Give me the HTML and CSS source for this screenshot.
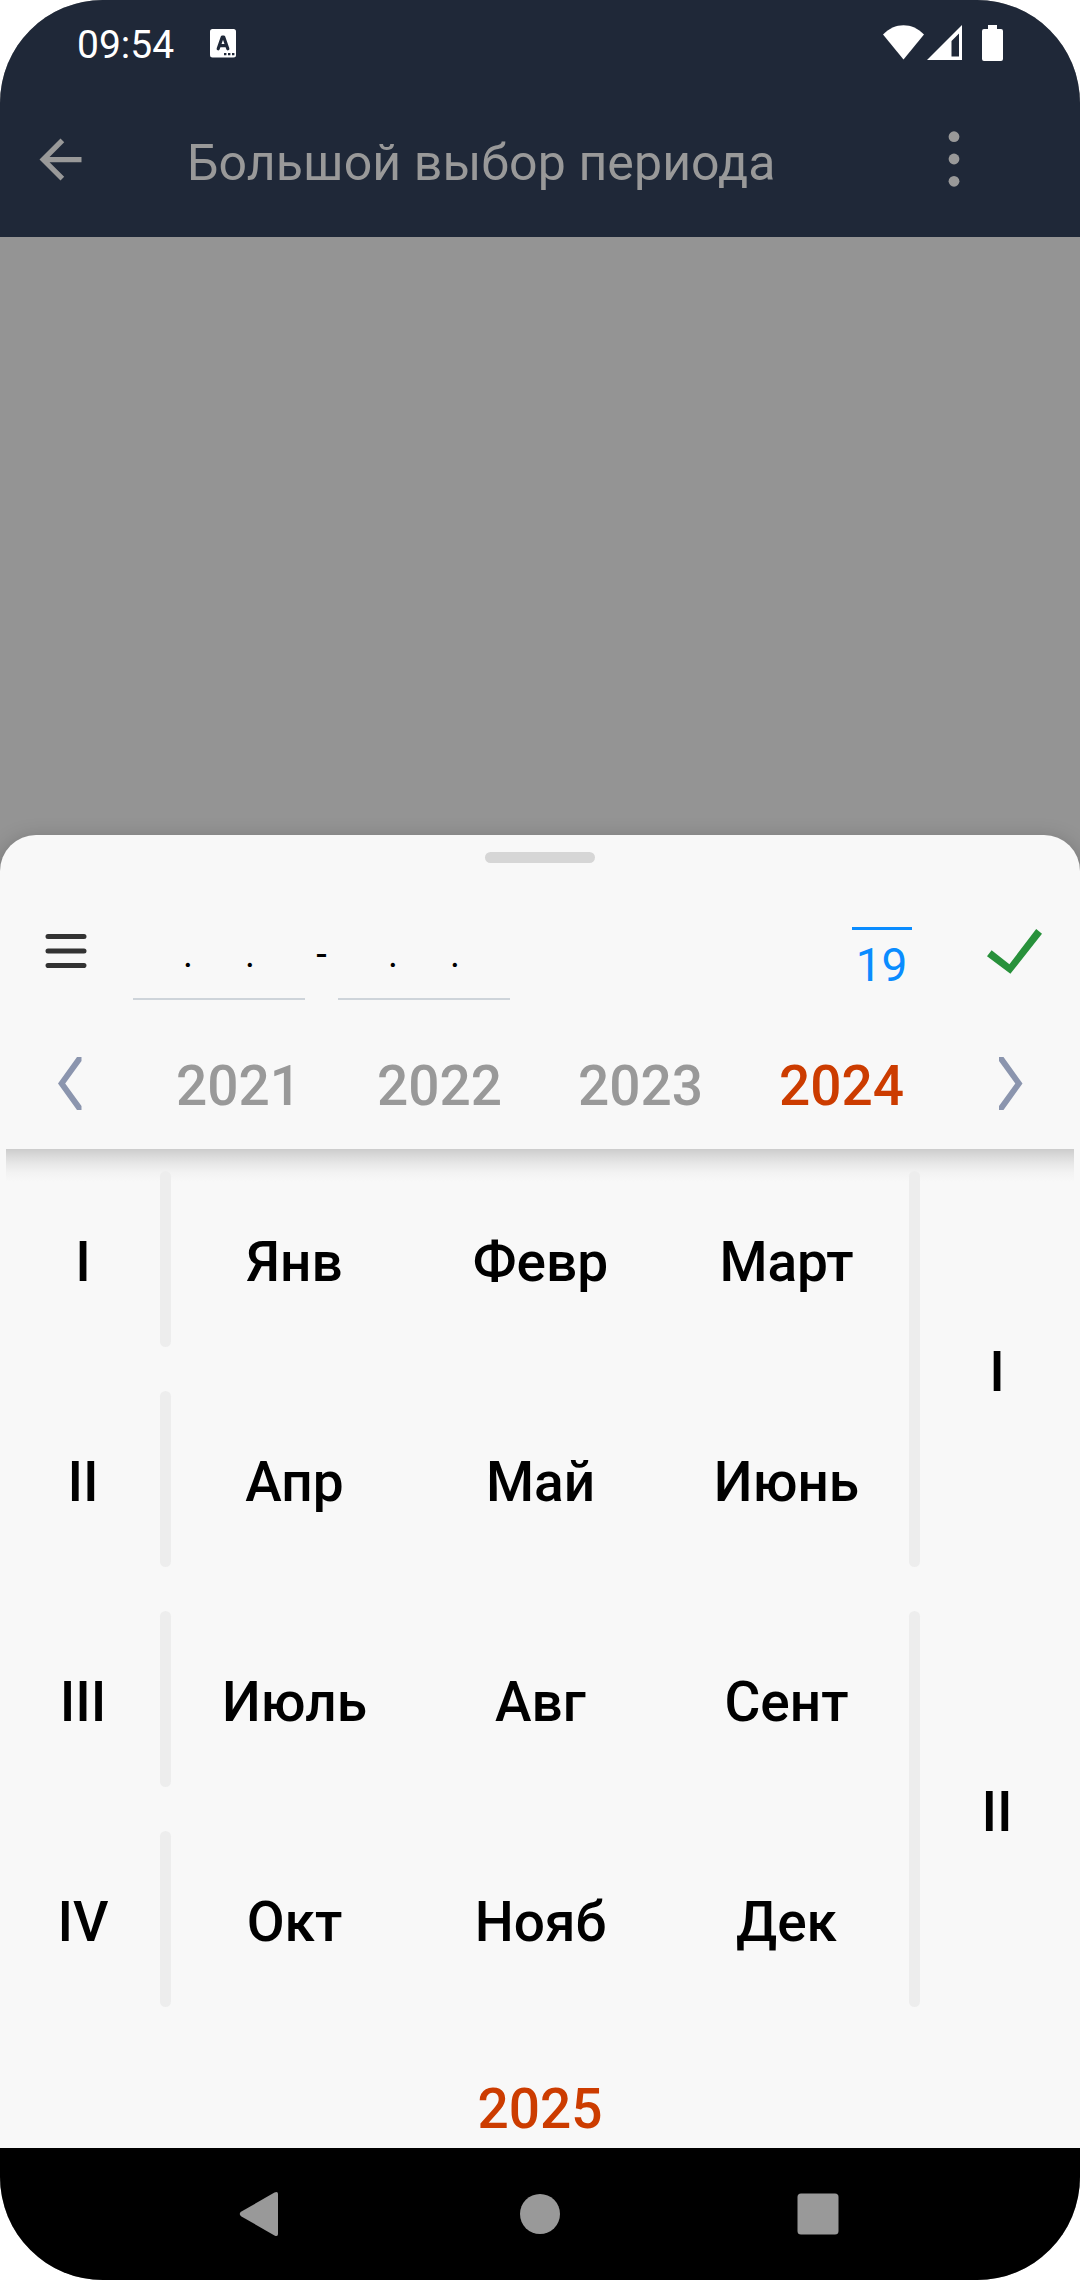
FILE: index.html
```html
<!DOCTYPE html>
<html lang="ru">
<head>
<meta charset="utf-8">
<title>Большой выбор периода</title>
<link rel="stylesheet" href="styles.css">
</head>
<body>
<div class="phone">
  <header class="top">
    <div class="status">
      <span class="time">09:54</span>
      <svg class="kbd" viewBox="0 0 26 29"><rect width="26" height="28.5" rx="2.500" fill="#fff"/><path d="M8.200 19.800 12.300 8h1.400l4.100 11.800M9.800 16.600h6.400" fill="none" stroke="#1f2838" stroke-width="3.200" stroke-linecap="round" stroke-linejoin="round"/><path d="M14 24h2.400v2.200H14zM18 24h2.400v2.200H18zM22 24h2.400v2.200H22z" fill="#1f2838"/></svg>
      <span class="grow"></span>
      <svg class="wifi" viewBox="0 0 41 35"><path d="M0 9.500C11.500-3 29.500-3 41 9.500L20.500 34.500z" fill="#fff"/></svg>
      <svg class="signal" viewBox="0 0 35 35"><path d="M35 0V35H0zM32 8.500 24.500 16V31.500H32z" fill="#fff" fill-rule="evenodd"/></svg>
      <svg class="battery" viewBox="0 0 21 36"><path d="M6 0h9v4h4q2 0 2 2v28q0 2-2 2H2q-2 0-2-2V6q0-2 2-2h4z" fill="#fff"/></svg>
    </div>
    <div class="toolbar">
      <svg class="back" viewBox="0 0 24 24"><path d="M20 11H7.830l5.590-5.590L12 4l-8 8 8 8 1.410-1.410L7.830 13H20z" fill="#999"/></svg>
      <h1 class="title">Большой выбор периода</h1>
      <svg class="more" viewBox="0 0 12 56"><g fill="#999"><circle cx="6" cy="5.700" r="5.400"/><circle cx="6" cy="28" r="5.400"/><circle cx="6" cy="50.300" r="5.400"/></g></svg>
    </div>
  </header>
  <div class="scrim"></div>
  <main class="sheet">
    <div class="grip"></div>
    <div class="controls">
      <svg class="menu" viewBox="0 0 42 34"><path d="M3 2.600h36M3 17h36M3 31.600h36" stroke="#333" stroke-width="5" stroke-linecap="round"/></svg>
      <div class="date"><span>.</span><span>.</span></div>
      <span class="dash">-</span>
      <div class="date"><span>.</span><span>.</span></div>
      <span class="grow"></span>
      <div class="today">19</div>
      <svg class="check" viewBox="0 0 55 45"><path d="M0 27.200 4.600 21.200 22.400 35.200 49.200 0 55 4.700 23.400 44.800z" fill="#28913b"/></svg>
    </div>
    <div class="years">
      <svg class="chevron" viewBox="0 0 24 53"><path d="M19 0H23.500V4L7.200 26.500 23.500 49V53H19L0 26.500z" fill="#8b95ae"/></svg>
      <span>2021</span><span>2022</span><span>2023</span><span class="accent">2024</span>
      <svg class="chevron" viewBox="0 0 24 53"><path d="M4.500 0H0V4L16.300 26.500 0 49V53H4.500L23.500 26.500z" fill="#8b95ae"/></svg>
    </div>
    <section class="calendar">
      <div class="quarters"><span>I</span><span>II</span><span>III</span><span>IV</span></div>
      <div class="bars"><i></i><i></i><i></i><i></i></div>
      <div class="months">
        <span>Янв</span><span>Февр</span><span>Март</span>
        <span>Апр</span><span>Май</span><span>Июнь</span>
        <span>Июль</span><span>Авг</span><span>Сент</span>
        <span>Окт</span><span>Нояб</span><span>Дек</span>
      </div>
      <div class="bars"><i></i><i></i></div>
      <div class="halves"><span>I</span><span>II</span></div>
    </section>
    <div class="next-year">2025</div>
  </main>
  <nav class="nav">
    <svg class="nav-icon" viewBox="0 0 46 46"><path d="M5 25.200Q2.500 23 5 20.800L38.500 1.500Q42 0 42 3V43Q42 46 38.500 44.500z" fill="#999"/></svg>
    <svg class="nav-icon nav-home" viewBox="0 0 46 46"><circle cx="23" cy="23" r="20" fill="#999"/></svg>
    <svg class="nav-icon" viewBox="0 0 46 46"><rect x="2.500" y="2.500" width="41" height="41" rx="3.500" fill="#999"/></svg>
  </nav>
</div>
</body>
</html>
```

FILE: styles.css
```css
* { box-sizing: border-box; }
body { margin: 0; background: #fff; font-family: Roboto, "Noto Sans", sans-serif; }
svg { display: block; flex: none; }
.phone { width: 1080px; height: 2280px; border-radius: 103px; overflow: hidden; display: flex; flex-direction: column; background: #949494; }
.grow { flex: 1; }

.top { height: 237px; background: #1f2838; flex: none; }
.status { display: flex; align-items: flex-start; height: 82px; padding: 25px 77px 0; color: #fff; }
.time { font-size: 39px; line-height: 40px; width: 133px; }
.kbd { width: 26px; height: 29px; margin-top: 4px; }
.wifi { width: 41px; height: 35px; }
.signal { width: 35px; height: 35px; margin: 0 20px 0 3px; }
.battery { width: 21px; height: 36px; }
.toolbar { display: flex; align-items: center; height: 155px; padding: 0 120px 0 29px; }
.back { width: 63px; height: 63px; }
.title { margin: 6px auto 0 95px; font-size: 50px; font-weight: 400; line-height: 60px; letter-spacing: .1px; color: #999; white-space: nowrap; }
.more { width: 12px; height: 56px; margin-bottom: 1px; }

.scrim { height: 598px; flex: none; }
.sheet { height: 1313px; flex: none; padding-top: 17px; background: #f8f8f8; border-radius: 36px 36px 0 0; box-shadow: 0 6px 22px rgba(0, 0, 0, .28); color: #000; }
.grip { width: 110px; height: 11px; margin: 0 auto; border-radius: 6px; background: #d6d6d6; }
.controls { display: flex; align-items: flex-start; height: 155px; padding: 62px 38px 0 45px; }
.menu { width: 42px; height: 34px; margin: 9px 46px 0 0; }
.date { display: flex; gap: 52px; width: 172px; height: 75px; padding: 7px 0 0 50px; border-bottom: 2px solid #ced4da; font-size: 38px; line-height: 45px; }
.date span { width: 10px; text-align: center; }
.dash { width: 33px; padding-top: 7px; text-align: center; font-size: 38px; line-height: 45px; }
.today { width: 60px; margin-right: 75px; margin-top: 2px; border-top: 3px solid #0a8cff; padding: 8px 1px 0 0; font-size: 46px; line-height: 54px; text-align: center; color: #0a8cff; }
.check { width: 55px; height: 45px; margin-top: 4px; }

.years { display: flex; align-items: center; height: 131px; padding: 0 57px 0 58px; font-size: 55px; font-weight: 500; color: #999; }
.years span { width: 201px; padding-top: 4px; text-align: center; }
.chevron { width: 24px; height: 53px; margin-bottom: 1px; }
.chevron:first-child { margin-right: 56px; }
.chevron:last-child { margin-left: 57px; }
.accent, .next-year { color: #cc3c00; }

.calendar { display: grid; grid-template-columns: 154px 11px 738px 11px 154px; height: 880px; margin: 0 6px; font-size: 55px; font-weight: 500; background: linear-gradient(#cccccc 0, #dadada 7px, #e8e8e8 15px, #f3f3f3 24px, #f8f8f8 33px); }
.quarters, .halves { display: grid; }
.months { display: grid; grid-template-columns: repeat(3, 246px); grid-auto-rows: 220px; }
.calendar span { display: flex; align-items: center; justify-content: center; padding-top: 6px; }
.calendar .months span { padding-left: 1px; }
.bars { display: flex; flex-direction: column; gap: 44px; padding: 22px 0; }
.bars i { flex: 1; border-radius: 6px; background: #ededed; }
.next-year { height: 119px; padding-top: 48px; font-size: 55px; font-weight: 500; line-height: 65px; text-align: center; }

.nav { display: flex; align-items: center; justify-content: space-between; height: 132px; padding: 0 239px 0 236px; background: #000; }
.nav-icon { width: 46px; height: 46px; }
.nav-home { margin-left: 3px; }
```
